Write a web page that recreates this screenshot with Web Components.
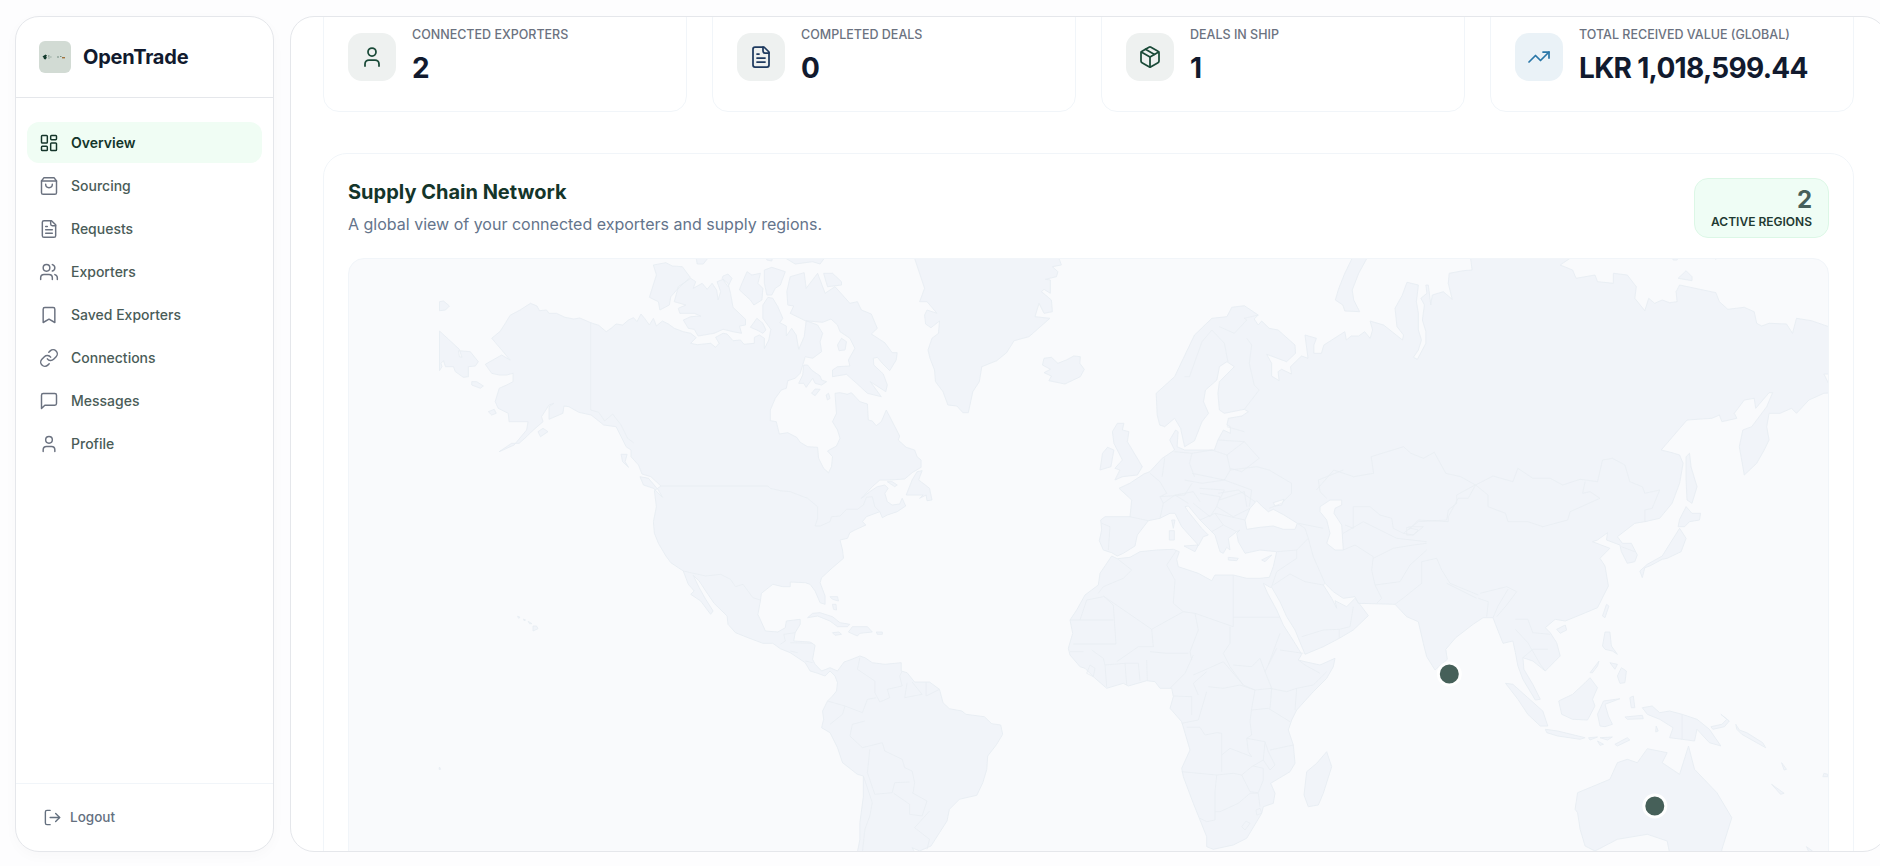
<!DOCTYPE html>
<html lang="en">
<head>
<meta charset="utf-8">
<title>OpenTrade</title>
<style>
  html, body { margin: 0; height: 100%; overflow: hidden; background: #fdfdfe; font-family: Inter, "Liberation Sans", sans-serif; }
  body { display: flex; gap: 16px; padding: 16px 0 14px 15px; box-sizing: border-box; }
</style>
</head>
<body>
<side-bar>
  <nav-item icon="dashboard" active>Overview</nav-item>
  <nav-item icon="bag">Sourcing</nav-item>
  <nav-item icon="file">Requests</nav-item>
  <nav-item icon="users">Exporters</nav-item>
  <nav-item icon="bookmark">Saved Exporters</nav-item>
  <nav-item icon="link">Connections</nav-item>
  <nav-item icon="message">Messages</nav-item>
  <nav-item icon="user">Profile</nav-item>
</side-bar>
<main-panel>
  <stat-row>
    <stat-card icon="user" color="#1a4a38" label="Connected Exporters" value="2"></stat-card>
    <stat-card icon="file" color="#1e3a5f" label="Completed Deals" value="0"></stat-card>
    <stat-card icon="package" color="#1a4a38" label="Deals in Ship" value="1"></stat-card>
    <stat-card icon="trend" color="#2a77a8" tint="#eaf2f7" label="Total Received Value (Global)" value="LKR 1,018,599.44"></stat-card>
  </stat-row>
  <network-card heading="Supply Chain Network" note="A global view of your connected exporters and supply regions." count="2" unit="Active Regions">
    <world-map></world-map>
  </network-card>
</main-panel>

<script>
const ICONS = {
  dashboard: '<rect width="7" height="9" x="3" y="3" rx="1"/><rect width="7" height="5" x="14" y="3" rx="1"/><rect width="7" height="9" x="14" y="12" rx="1"/><rect width="7" height="5" x="3" y="16" rx="1"/>',
  bag: '<path d="M6 2 3 6v14a2 2 0 0 0 2 2h14a2 2 0 0 0 2-2V6l-3-4Z"/><path d="M3 6h18"/><path d="M16 10a4 4 0 0 1-8 0"/>',
  file: '<path d="M15 2H6a2 2 0 0 0-2 2v16a2 2 0 0 0 2 2h12a2 2 0 0 0 2-2V7Z"/><path d="M14 2v4a2 2 0 0 0 2 2h4"/><path d="M10 9H8"/><path d="M16 13H8"/><path d="M16 17H8"/>',
  users: '<path d="M16 21v-2a4 4 0 0 0-4-4H6a4 4 0 0 0-4 4v2"/><circle cx="9" cy="7" r="4"/><path d="M22 21v-2a4 4 0 0 0-3-3.87"/><path d="M16 3.13a4 4 0 0 1 0 7.75"/>',
  bookmark: '<path d="m19 21-7-4-7 4V5a2 2 0 0 1 2-2h10a2 2 0 0 1 2 2v16z"/>',
  link: '<path d="M10 13a5 5 0 0 0 7.54.54l3-3a5 5 0 0 0-7.07-7.07l-1.72 1.71"/><path d="M14 11a5 5 0 0 0-7.54-.54l-3 3a5 5 0 0 0 7.07 7.07l1.71-1.71"/>',
  message: '<path d="M21 15a2 2 0 0 1-2 2H7l-4 4V5a2 2 0 0 1 2-2h14a2 2 0 0 1 2 2z"/>',
  user: '<path d="M19 21v-2a4 4 0 0 0-4-4H9a4 4 0 0 0-4 4v2"/><circle cx="12" cy="7" r="4"/>',
  logout: '<path d="M9 21H5a2 2 0 0 1-2-2V5a2 2 0 0 1 2-2h4"/><path d="m16 17 5-5-5-5"/><path d="M21 12H9"/>',
  package: '<path d="M11 21.73a2 2 0 0 0 2 0l7-4A2 2 0 0 0 21 16V8a2 2 0 0 0-1-1.73l-7-4a2 2 0 0 0-2 0l-7 4A2 2 0 0 0 3 8v8a2 2 0 0 0 1 1.73z"/><path d="M12 22V12"/><path d="M3.29 7 12 12l8.71-5"/><path d="m7.5 4.27 9 5.15"/>',
  trend: '<path d="M22 7 13.5 15.5 8.5 10.5 2 17"/><path d="M16 7h6v6"/>'
};

function icon(name, size, width) {
  return `<svg width="${size}" height="${size}" viewBox="0 0 24 24" fill="none" stroke="currentColor" stroke-width="${width}" stroke-linecap="round" stroke-linejoin="round">${ICONS[name]}</svg>`;
}

class SideBar extends HTMLElement {
  connectedCallback() {
    this.attachShadow({ mode: 'open' });
    this.shadowRoot.innerHTML = `
      <style>
        :host {
          display: flex; flex-direction: column; flex: none; box-sizing: border-box;
          width: 259px; height: 836px; background: #fff;
          border: 1px solid #e5e7eb; border-radius: 24px;
          box-shadow: 0 4px 14px rgba(15, 23, 42, 0.025);
        }
        header { display: flex; align-items: center; gap: 12px; padding: 24px 23px; border-bottom: 1px solid #e5e7eb; }
        .logo { width: 32px; height: 32px; border-radius: 6px; background: #d2dbd4; display: block; }
        .brand { font-size: 20px; font-weight: 700; color: #111a2e; letter-spacing: -0.2px; }
        nav { flex: 1; display: flex; flex-direction: column; gap: 2px; padding: 24px 11px; }
        footer { border-top: 1px solid #f1f5f9; padding: 23px 27px 24px; display: flex; align-items: center; gap: 8px; color: #64707f; font-size: 13.5px; font-weight: 500; height: 20px; }
        footer svg { display: block; }
      </style>
      <header>
        <svg class="logo" viewBox="0 0 32 32">
          <path d="M3.5 15.5 6.5 13.5 8 14.5 7 16 8 16.5 6.5 18.5 5 18 4.5 16.5Z" fill="#123a2c"/>
          <path d="M9 15h1.5M9.5 17h1M11.5 16h.8" stroke="#4a6a5c" stroke-width=".8"/>
          <path d="M18 16h2M21 15.5h1.5" stroke="#5a7a6c" stroke-width=".8"/>
          <rect x="23" y="16" width="3" height="1.4" fill="#a0733f"/>
        </svg>
        <span class="brand">OpenTrade</span>
      </header>
      <nav><slot></slot></nav>
      <footer>${icon('logout', 19, 1.75)}<span>Logout</span></footer>`;
  }
}

class NavItem extends HTMLElement {
  connectedCallback() {
    const active = this.hasAttribute('active');
    this.attachShadow({ mode: 'open' });
    this.shadowRoot.innerHTML = `
      <style>
        :host {
          display: flex; align-items: center; gap: 12px; height: 41px; padding: 0 12px; border-radius: 12px;
          font-size: 14px; font-weight: ${active ? 600 : 500};
          color: ${active ? '#14352a' : '#4a5c58'};
          background: ${active ? '#f0fdf4' : 'transparent'};
        }
        svg { display: block; flex: none; color: ${active ? '#14352a' : '#6b7280'}; }
      </style>
      ${icon(this.getAttribute('icon'), 20, 1.75)}<slot></slot>`;
  }
}

class MainPanel extends HTMLElement {
  connectedCallback() {
    this.attachShadow({ mode: 'open' });
    this.shadowRoot.innerHTML = `
      <style>
        :host {
          display: block; flex: none; box-sizing: border-box; width: 1597px; height: 836px;
          background: #fff; border: 1px solid #e5e7eb; border-radius: 24px; overflow: hidden;
        }
        .inner { margin-top: -15px; padding: 0 32px; display: flex; flex-direction: column; gap: 41px; }
      </style>
      <div class="inner"><slot></slot></div>`;
  }
}

class StatRow extends HTMLElement {
  connectedCallback() {
    this.attachShadow({ mode: 'open' });
    this.shadowRoot.innerHTML = `
      <style>:host { display: grid; grid-template-columns: repeat(4, 364px); gap: 25px; }</style>
      <slot></slot>`;
  }
}

class StatCard extends HTMLElement {
  connectedCallback() {
    const a = n => this.getAttribute(n);
    this.attachShadow({ mode: 'open' });
    this.shadowRoot.innerHTML = `
      <style>
        :host {
          display: flex; align-items: center; gap: 16px; box-sizing: border-box; height: 110px; padding: 24px;
          background: #fff; border: 1px solid #f1f5f9; border-radius: 16px;
        }
        .box { width: 48px; height: 48px; flex: none; border-radius: 14px; display: flex; align-items: center; justify-content: center;
               background: ${a('tint') || '#eef1f0'}; color: ${a('color')}; }
        .label { font-size: 12.5px; line-height: 16px; font-weight: 500; color: #6b7280; text-transform: uppercase; white-space: nowrap; }
        .value { font-size: 28px; line-height: 38px; margin-top: 6px; font-weight: 700; color: #111a2e; letter-spacing: -0.7px; white-space: nowrap; }
      </style>
      <div class="box">${icon(a('icon'), 24, 1.75)}</div>
      <div><div class="label">${a('label')}</div><div class="value">${a('value')}</div></div>`;
  }
}

class NetworkCard extends HTMLElement {
  connectedCallback() {
    const a = n => this.getAttribute(n);
    this.attachShadow({ mode: 'open' });
    this.shadowRoot.innerHTML = `
      <style>
        :host { display: block; box-sizing: border-box; width: 1531px; padding: 24px; background: #fff; border: 1px solid #f1f5f9; border-radius: 24px; }
        .head { display: flex; justify-content: space-between; align-items: flex-start; margin-bottom: 20px; }
        h2 { margin: 0; font-size: 20px; line-height: 28px; font-weight: 700; color: #14352a; }
        p { margin: 6px 0 0; font-size: 16px; line-height: 24px; color: #64748b; }
        .badge { box-sizing: border-box; height: 60px; padding: 7px 16px; text-align: right; background: #effdf5; border: 1px solid #dcf7e6; border-radius: 14px; }
        .count { font-size: 24px; line-height: 28px; font-weight: 700; color: #46605a; }
        .unit { font-size: 12px; line-height: 16px; font-weight: 600; color: #1f3a32; text-transform: uppercase; white-space: nowrap; }
      </style>
      <div class="head">
        <div><h2>${a('heading')}</h2><p>${a('note')}</p></div>
        <div class="badge"><div class="count">${a('count')}</div><div class="unit">${a('unit')}</div></div>
      </div>
      <slot></slot>`;
  }
}

// traced outlines, each point in the pixel space of one reference crop: [left, top, x scale]
const CROPS = { 6: [340, 250, .4975], 7: [1100, 250, .4975], 8: [340, 556, .4975], 9: [1100, 556, .4975], 11: [1060, 470, 1 / 3], 12: [1060, 640, 1 / 3] };

function trace(str, close) {
  let c;
  const pts = [];
  for (const tok of str.trim().split(/\s+/)) {
    if (!tok.includes(',')) { c = CROPS[tok]; continue; }
    const [a, b] = tok.split(',').map(Number);
    pts.push((c[0] + a * c[2]).toFixed(1) + ' ' + (c[1] + b / 3).toFixed(1));
  }
  return 'M' + pts.join('L') + (close ? 'Z' : '');
}

const LAND = [
  // americas
  '6 305,265 322,244 333,218 342,196 362,180 383,160 396,168 401,182 415,180 420,190 435,190 452,202 470,207 482,204 504,218 520,226 535,245 545,235 555,222 568,225 580,210 590,203 597,215 605,192 612,205 622,225 630,205 636,228 648,213 660,222 672,235 690,245 705,250 716,263 705,280 718,284 745,280 755,292 762,280 755,262 770,250 778,252 790,272 805,270 812,283 833,280 833,262 843,255 853,265 853,296 862,270 866,238 850,205 850,165 860,142 870,145 880,170 890,205 884,218 897,228 897,258 908,235 917,255 922,298 933,260 937,212 960,225 970,250 965,275 968,305 950,325 935,320 925,370 915,385 900,392 897,415 887,420 875,445 865,480 865,512 877,515 883,552 900,548 918,562 925,577 940,590 960,592 962,625 972,655 982,668 988,650 990,620 980,603 998,588 1005,565 1000,540 990,515 998,490 995,430 1005,428 1020,433 1028,428 1045,455 1060,462 1062,510 1070,513 1078,527 1088,515 1098,480 1125,558 1122,570 1138,592 1155,600 1160,620 1168,630 1168,652 1150,668 1135,687 1105,690 1085,690 1070,710 1048,745 1065,725 1080,710 1095,705 1102,715 1095,730 1100,755 1110,765 1125,762 1130,745 1137,768 1120,785 1100,795 1090,803 1085,785 1058,800 1050,815 1057,825 1035,840 1025,848 1020,865 1005,870 1010,900 1012,925 8 990,35 968,65 965,80 975,120 975,145 965,140 955,105 945,85 935,80 905,78 905,92 890,92 870,85 847,112 845,135 840,175 855,225 880,228 895,215 897,195 925,190 925,205 915,230 912,255 945,258 955,268 950,310 955,325 968,345 985,335 1000,345 1013,318 1025,312 1045,300 1055,305 1070,320 1095,325 1128,320 1128,345 1140,350 1155,378 1185,378 1205,400 1212,440 1225,458 1250,465 1258,475 1295,482 1310,503 1328,507 1332,535 1320,565 1302,600 1300,640 1292,680 1280,718 1245,730 1225,760 1220,795 1205,830 1188,870 1165,885 1150,875 1158,895 1158,930 1040,930 1040,888 1045,850 1045,800 1052,720 1052,660 1040,655 1010,620 1000,575 985,530 968,515 972,490 970,465 980,435 990,420 998,405 1000,380 995,360 985,345 975,360 960,352 945,345 935,320 905,290 885,278 870,262 850,262 820,245 795,230 780,205 778,180 752,142 735,105 722,75 710,58 722,95 735,130 750,165 745,175 725,135 705,115 712,105 700,85 690,45 665,20 655,0 6 640,880 632,850 630,815 636,770 632,722 645,708 625,680 607,672 600,645 585,620 585,600 575,590 565,560 555,530 530,525 505,495 480,487 460,470 450,468 448,490 420,508 420,470 430,460 420,465 405,500 408,515 385,545 375,560 360,580 345,580 320,605 350,585 375,540 378,515 355,515 340,515 338,490 318,475 312,455 320,415 335,405 348,395 348,370 335,375 320,375 305,370 292,343 325,315 342,330 325,300',
  // arctic canada and neighbours
  '6 715,15 718,42 730,42 745,15',
  '6 855,15 858,30 868,33 870,15',
  '6 885,15 915,42 950,35 965,42 978,15',
  '6 630,45 655,38 668,48 688,50 704,82 680,115 665,140 662,165 643,180 640,155 622,142 636,75',
  '6 672,155 680,110 705,85 715,95 710,115 728,100 738,118 748,100 757,120 760,150 765,125 758,95 770,88 780,100 785,130 790,172 815,208 815,225 803,228 807,250 790,245 770,238 752,250 720,258 712,238 700,235 690,210 705,200 725,198 712,190 683,190 680,175 695,165',
  '6 805,110 818,65 828,75 845,70 840,100 850,115 848,150 832,165 825,150 803,120',
  '6 770,78 780,72 788,85 780,110 768,85',
  '6 853,60 868,52 895,65 885,105 875,115 868,135 858,135 853,100',
  '6 905,80 933,68 937,115 960,70 975,130 995,110 1025,160 1040,155 1048,180 1068,192 1080,235 1068,252 1095,278 1110,308 1120,308 1118,330 1105,362 1090,340 1080,322 1072,325 1073,345 1092,372 1100,405 1097,425 1066,395 1088,440 1060,430 1040,402 1018,373 990,380 990,360 1000,350 1025,348 1022,330 1035,295 1025,265 1005,245 1000,225 987,207 970,217 935,212 905,190 912,168 900,165 898,125',
  '6 972,70 990,70 1008,95 1008,105 980,110',
  '6 825,232 838,205 850,220 856,240 850,250 838,240',
  '6 1000,285 1008,265 1018,275 1015,300 1003,302',
  '6 932,345 940,345 948,360 965,378 968,390 978,395 968,405 955,400 950,385 937,412 932,400 922,400 930,375',
  '6 948,430 955,417 965,418 955,437',
  '6 977,435 982,430 985,445 980,450',
  '6 603,680 620,685 640,720 648,742 630,715 610,705',
  '6 565,613 577,613 573,635 580,652 568,635',
  '6 398,545 408,535 418,545 403,560',
  '6 265,395 275,395 288,408 282,415 265,405',
  '6 298,485 310,478 314,490 305,495',
  '6 200,155 208,153 220,168 212,180 200,182',
  '6 200,243 240,298 245,322 240,320 238,302 262,305 278,335 272,348 258,350 258,380 248,382 232,365 228,350 212,350 208,332 203,340 205,350 200,362',
  '6 1138,735 1150,690 1160,665 1170,662 1163,690 1172,700 1185,715 1190,750 1180,752 1178,735 1165,745 1172,735',
  '6 1100,695 1110,695 1120,705 1115,710',
  '6 1155,-30 1155,25 1175,115 1165,155 1180,155 1200,190 1180,180 1175,195 1177,222 1188,233 1205,213 1203,250 1190,265 1182,300 1186,325 1195,360 1197,395 1212,425 1222,465 1240,468 1252,488 1263,488 1272,425 1285,395 1290,350 1320,332 1340,308 1355,272 1385,260 1427,205 1397,200 1405,160 1415,190 1432,185 1430,150 1410,125 1415,118 1428,130 1428,90 1418,88 1440,80 1443,65 1432,50 1450,45 1445,25 1445,-30',
  '6 1412,345 1415,325 1430,322 1443,340 1460,330 1475,318 1488,320 1487,340 1496,358 1488,380 1457,402 1425,392 1430,378 1415,368 1428,358',
  // pacific dots and caribbean
  '8 357,181 362,184 359,187', '8 369,189 373,192 370,194', '8 378,196 386,203 381,203',
  '8 388,210 395,210 398,218 388,225', '8 200,633 202,640 199,640',
  '8 940,185 950,172 965,170 990,182 1005,200 1025,205 1020,212 1000,212 985,195 960,180',
  '8 1022,228 1030,212 1060,212 1070,228 1045,232 1040,240',
  '8 990,230 1003,228 1008,235 995,238',
  '8 1078,228 1090,228 1090,235 1080,235',
  '8 985,122 1000,122 1002,135 990,130',
  '8 990,145 997,145 998,162 992,160',
  // eurasia and africa
  '7 113,430 150,380 190,255 225,205 255,200 265,172 290,167 318,195 310,207 318,225 325,213 340,235 358,240 392,285 393,310 375,335 335,313 345,340 345,378 360,392 358,365 365,358 385,372 383,350 405,318 418,325 412,255 435,265 430,285 430,310 445,310 450,285 492,245 495,270 505,258 520,258 532,245 543,265 548,240 543,213 570,225 608,270 610,255 597,230 593,175 607,137 617,97 640,105 636,155 640,190 640,240 646,270 640,300 630,322 638,328 655,280 655,245 648,210 652,165 645,145 657,130 655,105 660,105 665,165 668,135 690,125 708,148 700,100 702,70 730,62 748,60 745,25 745,-30 925,-30 945,25 925,45 950,60 957,85 995,75 1000,95 1032,100 1032,70 1060,75 1078,110 1075,145 1095,182 1103,145 1115,160 1130,150 1145,158 1160,155 1158,125 1165,105 1238,128 1245,155 1262,178 1295,172 1315,185 1320,220 1330,228 1345,220 1380,222 1392,250 1400,205 1430,212 1465,230 1500,240 1500,372 1455,372 1465,402 1500,402 1500,425 1455,430 1425,450 1400,490 1390,475 1367,490 1345,490 1340,530 1345,570 1335,600 1320,640 1295,675 1285,590 1292,540 1310,530 1340,470 1352,428 1345,428 1318,475 1315,445 1295,450 1275,490 1280,505 1250,515 1245,495 1230,505 1180,510 1128,600 1150,608 1165,615 1172,640 1165,700 1150,760 1125,805 1095,815 1075,820 1040,860 1050,880 1068,880 1080,915 1075,935 1060,940 1048,905 1045,885 1018,870 1020,848 1000,870 990,875 1025,895 1005,925 9 1015,30 1022,90 1000,155 960,180 935,195 915,190 895,215 905,230 918,260 925,300 895,345 870,315 850,305 852,340 870,385 885,430 875,432 850,370 840,330 835,290 830,255 810,262 795,205 790,185 770,185 750,205 715,245 695,280 698,310 11 1125,600 1100,560 1090,520 1075,455 1040,440 1005,403 895,400 885,380 850,385 820,365 795,340 790,345 815,385 830,415 825,392 860,410 885,385 905,410 925,437 880,480 838,505 790,530 735,553 705,480 680,440 660,395 635,352 630,352 610,340 622,368 650,420 670,465 705,520 725,553 715,570 12 735,65 780,75 825,55 820,80 800,115 760,155 710,210 695,240 685,270 700,315 705,370 690,395 632,430 645,460 640,490 610,500 605,520 560,595 520,615 460,628 440,620 440,590 420,540 400,490 370,410 365,385 390,330 365,245 330,205 340,170 335,145 300,145 285,125 260,122 205,138 190,130 140,145 100,110 75,85 60,80 30,45 25,25 11 38,490 30,450 50,420 75,375 115,345 120,310 155,258 172,266 210,262 240,245 290,240 340,238 358,245 350,268 355,290 415,310 455,332 465,315 520,315 560,325 600,325 628,322 640,290 650,245 600,240 555,250 535,215 530,190 540,180 530,185 505,205 510,240 500,232 490,250 480,245 465,195 455,185 420,150 385,108 375,110 385,125 425,175 445,195 430,200 415,228 410,220 365,170 345,130 330,130 300,145 265,152 232,195 225,228 190,250 172,258 155,248 130,240 118,212 125,180 122,150 135,140 210,140 215,90 177,55 7 60,700 88,672 100,665 125,625 130,620 150,600 140,570 152,540 157,545 155,590 170,600 215,600 230,600 237,570 248,540 262,550 262,530 255,525 258,505 285,498 298,485 290,478 250,490 240,480 237,430 240,395 270,350 255,335 240,350 235,390 212,420 208,455 218,490 205,515 190,572 170,590 162,535 150,505 130,530 120,525 115,495',
  // inland seas, cut out by evenodd
  '11 590,92 605,108 625,125 640,118 672,135 712,160 705,178 670,178 640,168 600,172 560,178 555,150 570,115',
  '11 780,110 810,90 845,90 845,105 825,115 822,130 845,165 850,240 825,240 800,220 810,190 800,150 780,125',
  '11 640,98 672,88 665,105 645,108',
  // eurasian islands
  '7 510,15 540,15 520,70 507,120 510,150 522,185 492,183 488,165 473,150 480,115 492,70',
  '7 1178,620 1185,610 1188,650 1200,710 1190,760 1180,750 1178,690',
  '7 1178,770 1190,790 1207,790 1205,810 1185,815 1175,830 1162,830 1165,808',
  '7 1165,835 1178,865 1168,905 1140,925 9 1130,10 1105,30 1095,35 1090,65 1085,45 1100,25 1130,0',
  '7 1162,85 1178,62 1190,80 1190,92',
  '7 1150,15 1162,15 1160,30 1152,30', '7 1225,15 1240,15 1238,28',
  '7 35,520 48,520 45,540 58,545 55,575 85,650 75,675 45,680 30,690 40,660 30,655 45,630 28,580 25,545',
  '7 0,660 5,610 15,592 28,600 22,650',
  '11 328,182 343,182 343,210 328,210', '11 335,150 345,150 340,175',
  '11 372,228 415,225 405,245', '11 505,262 535,265 530,272 505,270', '11 605,270 635,255 615,275',
  // south east asia, oceania
  '9 1010,180 1018,145 1023,150 1015,185', '9 918,220 935,207 938,222 925,232',
  '9 1010,270 1015,228 1025,228 1028,270 1040,295 1030,285 1015,280',
  '9 1040,360 1048,335 1058,345 1055,380 1045,382', '9 985,350 1003,315 1000,330 990,350', '9 1025,320 1040,325 1035,340',
  '9 922,435 950,415 975,380 985,365 1000,395 990,430 995,450 980,492 950,490 928,475',
  '9 815,382 830,385 860,425 890,465 900,510 885,510 860,475 840,430',
  '9 895,520 920,525 975,545 965,550 920,540 898,530',
  '9 982,545 1000,543 985,552', '9 1005,545 1030,543 1020,552', '9 1000,555 1012,565 1005,568', '9 1035,565 1060,545 1065,552 1040,570',
  '9 1000,475 1012,435 1045,428 1015,445 1022,480 1030,505 1015,512 1005,510',
  '9 1065,425 1072,420 1075,455 1068,455', '9 1055,483 1090,478 1092,488 1060,490', '9 1118,510 1122,525 1117,528',
  '9 1090,455 1110,450 1125,470 1145,465 1170,475 1200,490 1225,520 1248,570 1225,560 1200,520 1195,555 1170,550 1145,545 1152,515 1125,490 1100,475',
  '9 1228,512 1250,505 1260,490 1248,475 1265,495 1255,512 1232,520',
  '9 1278,505 1285,522 1300,530 1332,560 1338,575 1320,560 1290,535 1280,520',
  '9 1370,620 1380,640 1375,642', '9 1350,685 1375,712 1368,715', '9 1455,652 1463,655 1463,662 1453,662', '9 1420,872 1432,885 1425,888',
  '9 955,760 960,710 1025,670 1040,620 1060,610 1080,620 1100,578 1140,590 1130,620 1165,655 1183,570 1195,640 1240,710 1270,785 1250,880 1245,930 1150,930 1140,855 1100,835 1040,850 995,885 975,870 965,820 960,770',
  '12 800,335 815,380 790,460 775,495 745,500 732,465 740,395 770,370'
];

const BORDERS = [
  // north america
  '6 504,218 504,480 520,487 532,513 548,492 565,525 578,565 590,578',
  '6 645,708 860,708 865,715 885,722 905,725 940,745 960,770 960,805 955,828 965,828 985,815 988,800 1005,798 1018,778 1040,778 1052,765 1058,742 1070,740 1075,770 1085,785',
  '8 690,45 735,60 765,55 785,70 795,92 810,85 830,125 845,132',
  '8 915,230 892,235 895,255 885,265', '8 905,260 950,262', '8 920,290 905,285', '8 935,315 950,320',
  // south america
  '8 1045,305 1040,340 1075,375 1075,410 1085,438 1105,425 1100,400 1130,390 1125,360 1130,345',
  '8 1140,380 1135,425 1170,415 1150,378', '8 1178,380 1178,420 1205,400',
  '8 980,435 1015,450 1010,475 985,505', '8 1015,450 1050,470 1060,430 1078,425',
  '8 1055,495 1030,505 1025,540 1050,575 1090,560 1095,585 1130,610 1135,635 1150,645 1155,680 1152,710',
  '8 1065,580 1060,650 1075,715 1110,710 1115,680 1145,678',
  '8 1113,712 1145,745 1145,775 1170,780 1180,735 1150,710',
  '8 1052,660 1070,740 1065,780 1055,820 1050,888',
  '8 1155,815 1185,850 1180,880', '8 1155,815 1185,765',
  // africa, north
  '11 172,266 215,300 190,325 130,350 115,370', '11 60,450 80,390 130,380', '11 30,450 160,450',
  '11 130,378 160,405 168,522 40,522', '11 130,378 275,478 370,425',
  '11 350,240 320,285 345,330 340,400 370,425 405,430 520,470', '11 520,315 520,470',
  '11 520,442 660,442', '11 510,470 510,520 490,550 510,590', '11 405,430 415,480 390,545 395,570',
  '11 275,478 280,530 235,530 170,575', '11 270,545 320,550 385,550',
  '11 660,490 645,530 625,585', '11 660,540 730,550',
  // africa, south
  '12 195,70 200,135', '12 235,70 240,122', '12 260,60 262,122', '12 135,75 140,140',
  '12 90,75 105,85 100,110 80,100 90,75', '12 30,35 70,35', '12 95,30 130,55 135,75 195,70 235,70',
  '12 400,45 375,100 330,145', '12 400,105 490,65 550,135', '12 415,165 400,130 440,95',
  '12 445,140 490,145 540,135 585,150 575,205 570,245 575,285 560,295 565,335 575,350 510,325 485,345 485,280 470,278 435,285 420,262 380,262',
  '12 340,168 395,170 395,225', '12 440,155 415,240 365,250',
  '12 365,395 470,405 520,400', '12 485,345 485,395',
  '12 520,400 545,405 575,380 610,360 615,305 560,295',
  '12 470,405 465,455 465,540 440,545 420,535', '12 465,515 480,515 535,490 570,460 595,460 600,500',
  '12 545,405 570,455 595,458 610,420 610,385 580,378', '12 630,330 700,315',
  '12 615,305 625,335 645,375 630,390 610,360', '12 625,205 575,210', '12 625,205 690,245',
  '12 585,150 635,145 630,205', '12 630,145 680,155 710,145 705,210', '12 710,145 760,135 800,95',
  '12 510,80 550,135 585,150', '12 635,145 615,95 600,55 575,80 520,75', '12 780,100 735,75 715,60', '12 650,25 615,95',
  '12 545,560 558,543 570,550 555,570 545,560', '12 588,510 600,505 605,520 590,525 588,510',
  // europe
  '11 125,160 150,170 145,240', '11 210,140 265,152', '11 300,145 310,100 300,80 320,70 300,35 270,10',
  '11 310,100 345,75 385,100', '11 345,75 400,65 420,95', '11 420,70 480,80 470,110 520,140 570,115',
  '11 475,70 535,60 585,95', '11 465,130 555,150', '11 400,100 450,140 470,110', '11 420,150 465,130 490,165 455,185',
  '11 490,165 530,185', '7 125,680 130,625', '7 150,605 185,610 180,640 190,680', '7 185,610 225,600 255,615 262,660 250,690 185,670',
  '7 255,615 290,575 320,625 285,665 262,655', '7 238,570 290,575', '7 255,530 290,545',
  '7 295,265 305,285 300,340 310,405 320,420 290,478', '7 170,380 180,380 205,275 225,240 250,280 257,335',
  '7 240,230 270,250 295,210 290,205 318,195', '7 262,660 315,650 340,660 385,700 385,730 365,760 340,775',
  '7 250,690 305,720 300,770', '7 120,740 170,735 185,700', '7 170,690 205,700 250,690', '7 200,715 250,720 240,750', '7 240,750 290,725 295,770',
  // asia
  '11 650,245 710,240 745,205 735,175 712,160', '11 715,160 790,175', '11 710,240 710,265 650,305 635,350',
  '11 745,205 760,260 795,340', '11 640,345 690,312 735,335 790,345',
  '11 725,500 790,480 838,478 838,505', '11 838,478 870,470 880,410',
  '11 850,240 885,225 940,260 935,300 945,345 965,385 950,400', '11 945,345 1020,335 1050,285 1100,240',
  '11 940,265 1000,235 1060,225 1100,220', '11 1005,403 1035,380 1085,340 1085,275 1130,265 1145,300 1170,340 1255,375',
  '11 1160,340 1250,385', '11 1260,370 1340,350 1370,365 1340,405 1310,440', '11 1255,385 1285,395 1280,440',
  '11 775,30 780,65 800,85', '11 775,30 850,0',
  '11 880,110 880,175 855,165', '11 880,110 930,110 960,135 995,145 1000,175 1030,190 1075,155 1160,150 1165,120 1190,100 1190,75 1245,45',
  '11 850,190 910,155 1010,205 1100,215', '11 1045,170 1090,170 1060,195 1030,190', '11 1040,172 1075,180 1060,195 1040,195 1040,172',
  '7 435,720 470,660 510,680 550,670 545,620 610,590 625,610 650,625 672,607 695,670 725,680 755,705',
  '7 755,705 790,678 830,695 840,655 870,685 905,685 930,705 965,688 1000,695 1010,630 1030,625 1055,645 1065,695 1090,710 1095,730 1125,720 1110,775 1095,780 1095,815',
  '7 755,705 780,735 780,770 815,790 820,815 860,815 890,830 940,810 945,785 1005,745 985,725 970,730 975,695',
  '7 755,705 740,745 720,745 700,800 700,815 640,810 620,840',
  '7 1048,890 1075,905',
  '9 790,185 800,150 820,100', '9 835,190 860,190 870,230 905,235', '9 835,220 860,260 885,325 895,345', '9 850,305 870,280 900,280',
  '9 1170,475 1170,550'
];

class WorldMap extends HTMLElement {
  connectedCallback() {
    this.attachShadow({ mode: 'open' });
    const land = LAND.map(s => trace(s, true)).join('');
    const lines = BORDERS.map(s => trace(s, false)).join('');
    this.shadowRoot.innerHTML = `
      <style>
        :host { display: block; height: 700px; background: #f9fafc; border: 1px solid #f1f5f9; border-radius: 16px; overflow: hidden; }
        svg { display: block; }
      </style>
      <svg width="1480" height="700" viewBox="349 259 1480 700">
        <path d="${land}" fill="#f1f4f9" fill-rule="evenodd" stroke="#e8edf3" stroke-width=".9" stroke-linejoin="round"/>
        <path d="${lines}" fill="none" stroke="#e8edf3" stroke-width=".8" stroke-linejoin="round"/>
        <circle cx="1449.3" cy="674" r="11" fill="#466059" stroke="#fff" stroke-width="3"/>
        <circle cx="1654.8" cy="806" r="11" fill="#466059" stroke="#fff" stroke-width="3"/>
      </svg>`;
  }
}

customElements.define('side-bar', SideBar);
customElements.define('nav-item', NavItem);
customElements.define('main-panel', MainPanel);
customElements.define('stat-row', StatRow);
customElements.define('stat-card', StatCard);
customElements.define('network-card', NetworkCard);
customElements.define('world-map', WorldMap);
</script>
</body>
</html>
